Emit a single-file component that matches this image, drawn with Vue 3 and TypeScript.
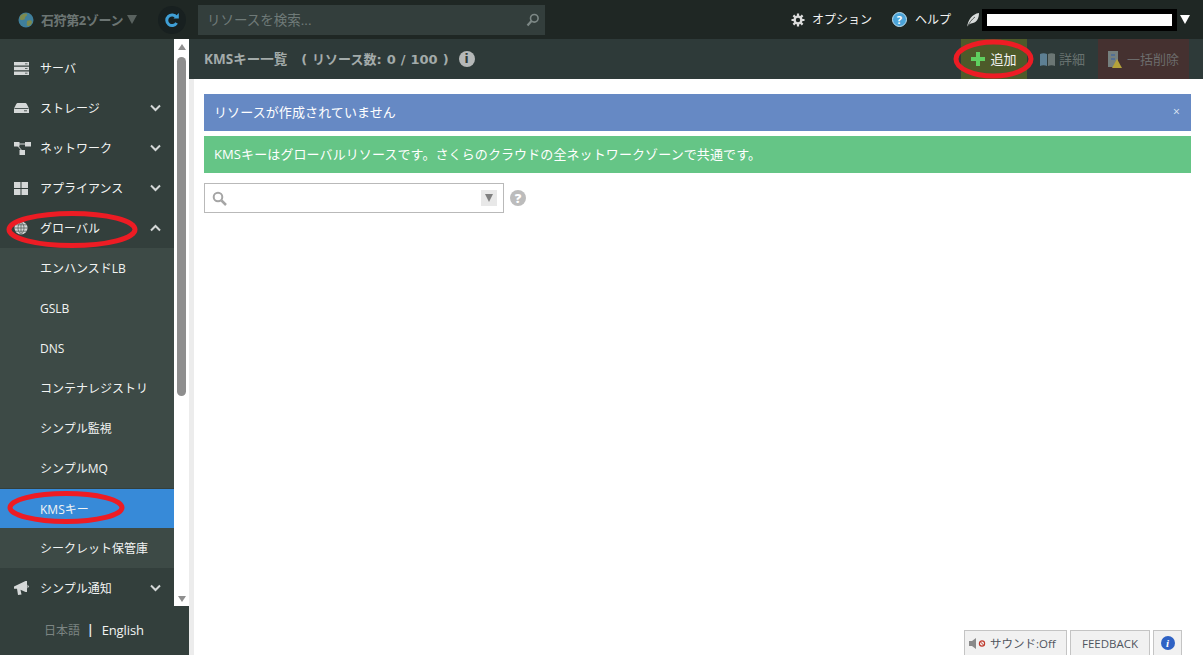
<script setup lang="ts">
interface NavItem { label: string; icon?: string; chevron?: 'up' | 'down'; sub?: boolean; active?: boolean }
const items: NavItem[] = [
  { label: 'サーバ', icon: 'server' },
  { label: 'ストレージ', icon: 'disk', chevron: 'down' },
  { label: 'ネットワーク', icon: 'net', chevron: 'down' },
  { label: 'アプライアンス', icon: 'grid', chevron: 'down' },
  { label: 'グローバル', icon: 'globe', chevron: 'up' },
  { label: 'エンハンスドLB', sub: true },
  { label: 'GSLB', sub: true },
  { label: 'DNS', sub: true },
  { label: 'コンテナレジストリ', sub: true },
  { label: 'シンプル監視', sub: true },
  { label: 'シンプルMQ', sub: true },
  { label: 'KMSキー', sub: true, active: true },
  { label: 'シークレット保管庫', sub: true },
  { label: 'シンプル通知', icon: 'horn', chevron: 'down' },
]
</script>

<template>
  <div class="app">
    <header class="top">
      <div class="zone">
        <svg class="globe" width="16" height="16" viewBox="0 0 16 16">
          <circle cx="8" cy="8" r="7.5" fill="#3f7f9c" />
          <path d="M3 3c2-1 5-2 6-1 1 2-2 2-2 4S4 8 3 8 1 5 3 3zM9 9c2-1 5-1 5 1s-2 4-4 4-1-3-1-5z" fill="#7d8a4e" />
        </svg>
        <span class="zone-name">石狩第2ゾーン</span>
        <span class="zone-arrow"></span>
      </div>
      <div class="refresh">
        <svg width="16" height="16" viewBox="0 0 16 16">
          <path d="M12.4 5.2A5.3 5.3 0 1 0 12.6 11" fill="none" stroke="#3f9fd6" stroke-width="3" />
          <path d="M9.5 6.5h5.3V1z" fill="#3f9fd6" />
        </svg>
      </div>
      <div class="search">
        <span class="search-text">リソースを検索...</span>
        <svg width="14" height="14" viewBox="0 0 14 14">
          <circle cx="8.3" cy="5.3" r="3.8" fill="none" stroke="#7d8886" stroke-width="1.6" />
          <path d="M5.5 8 1.5 12.5" stroke="#7d8886" stroke-width="2.2" />
        </svg>
      </div>
      <div class="spacer"></div>
      <div class="tool gear-tool">
        <svg width="14" height="14" viewBox="0 0 14 14">
          <circle cx="7" cy="7" r="3.4" fill="none" stroke="#dcdcdc" stroke-width="2.4" />
          <path d="M7 .5v3M7 10.5v3M.5 7h3M10.5 7h3M2.4 2.4l2 2M9.6 9.6l2 2M11.6 2.4l-2 2M4.4 9.6l-2 2" stroke="#dcdcdc" stroke-width="2.2" />
        </svg>
        <span>オプション</span>
      </div>
      <div class="tool help-tool">
        <span class="help-dot">?</span>
        <span>ヘルプ</span>
      </div>
      <svg class="feather" width="14" height="16" viewBox="0 0 14 16">
        <path d="M1 15C2 8 6 2 13 1c0 5-2 9-6 10-1 .3-3 .5-4 1.500z" fill="#d8dcdb" />
        <path d="M1 15.500C3 11 6 7 9 5" stroke="#1f2724" stroke-width=".7" fill="none" />
      </svg>
      <div class="account"><div class="account-inner"></div></div>
      <span class="account-arrow"></span>
    </header>

    <div class="body">
      <aside class="side">
        <div class="nav-wrap">
          <nav class="nav">
            <div
              v-for="item in items"
              :key="item.label"
              class="nav-item"
              :class="{ sub: item.sub, active: item.active }"
            >
              <span v-if="!item.sub" class="nav-icon">
                <svg v-if="item.icon === 'server'" width="15" height="13" viewBox="0 0 15 13">
                  <path d="M0 0h15v3.6H0zM0 4.7h15v3.6H0zM0 9.4h15V13H0z" fill="#d5d8d8" />
                  <path d="M11 1.8h2.5M11 6.5h2.5M11 11.2h2.5" stroke="#5d6866" />
                </svg>
                <svg v-else-if="item.icon === 'disk'" width="15" height="10" viewBox="0 0 15 10">
                  <path d="M4 0h7c1 0 1.500.5 2 1.500L15 5.500V10H0V5.500L2 1.500C2.500.5 3 0 4 0z" fill="#d5d8d8" />
                  <path d="M.5 5.500h14M10 7.800h3" stroke="#4d5856" />
                </svg>
                <svg v-else-if="item.icon === 'net'" width="17" height="13" viewBox="0 0 17 13">
                  <path d="M3 2h11M3 3l6 7" stroke="#d5d8d8" stroke-width="1" fill="none" />
                  <path d="M0 0h5.500v4.500H0zM11 0h6v4.500h-6zM5.500 8H11v5H5.500z" fill="#d5d8d8" />
                </svg>
                <svg v-else-if="item.icon === 'grid'" width="14" height="13" viewBox="0 0 14 13">
                  <path d="M0 0h6.500v6H0zM7.500 0H14v6H7.500zM0 7h6.500v6H0zM7.500 7H14v6H7.500z" fill="#d5d8d8" />
                </svg>
                <svg v-else-if="item.icon === 'globe'" width="14" height="14" viewBox="0 0 14 14">
                  <circle cx="7" cy="7" r="6.500" fill="#d5d8d8" />
                  <path d="M.5 7h13M1.500 3.800h11M1.500 10.200h11M7 .5v13M7 .5C3 4 3 10 7 13.500M7 .5c4 3.500 4 9.500 0 13" fill="none" stroke="#59635f" stroke-width=".8" />
                </svg>
                <svg v-else width="15" height="14" viewBox="0 0 15 14">
                  <path d="M0 5.500 11.500 0h1.500v11h-1.500L6.500 8.800 7.500 13.500 4 14 3 7.700H0zM13.500 3.500 15 5.500l-1.500 2z" fill="#d5d8d8" />
                </svg>
              </span>
              <span class="nav-label">{{ item.label }}</span>
              <svg v-if="item.chevron" class="chev" width="11" height="8" viewBox="0 0 11 8">
                <path :d="item.chevron === 'down' ? 'M1 1.500 5.500 6 10 1.500' : 'M1 6.500 5.500 2 10 6.500'" fill="none" stroke="#d5d8d8" stroke-width="2" />
              </svg>
            </div>
          </nav>
          <div class="scrollbar">
            <span class="sb-up"></span>
            <span class="sb-thumb"></span>
            <span class="sb-down"></span>
          </div>
        </div>
        <div class="lang">
          <span class="lang-ja">日本語</span>
          <span class="lang-sep">|</span>
          <span class="lang-en">English</span>
        </div>
      </aside>

      <main class="main">
        <div class="title-bar">
          <div class="title">KMSキー一覧</div>
          <div class="count">( リソース数: 0 / 100 )</div>
          <span class="info-dot">i</span>
          <div class="spacer"></div>
          <div class="act add">
            <svg width="14" height="14" viewBox="0 0 14 14">
              <path d="M5 0h4v5h5v4H9v5H5V9H0V5h5z" fill="#5fcf5f" />
            </svg>
            <span>追加</span>
          </div>
          <div class="act detail">
            <svg width="15" height="13" viewBox="0 0 15 13">
              <path d="M0 1c2-1 5-1 7 0v12c-2-1-5-1-7 0z" fill="#5d7f93" />
              <path d="M8 1c2-1 5-1 7 0v12c-2-1-5-1-7 0z" fill="#6b7674" />
            </svg>
            <span>詳細</span>
          </div>
          <div class="act del">
            <svg width="15" height="17" viewBox="0 0 15 17">
              <path d="M0 0h10v16H0z" fill="#75807f" />
              <path d="M3 4h4M3 8h4" stroke="#4a6a9a" stroke-width="1.500" />
              <path d="M9 8l5 9H4z" fill="#b5a33a" />
            </svg>
            <span>一括削除</span>
          </div>
        </div>
        <div class="content">
          <div class="alert blue">
            <span>リソースが作成されていません</span>
            <span class="close">×</span>
          </div>
          <div class="alert green">KMSキーはグローバルリソースです。さくらのクラウドの全ネットワークゾーンで共通です。</div>
          <div class="filter-row">
            <div class="filter">
              <svg width="15" height="15" viewBox="0 0 15 15">
                <circle cx="6" cy="6" r="4.300" fill="none" stroke="#a5a5a5" stroke-width="2" />
                <path d="M9.500 9.500 14 14" stroke="#a5a5a5" stroke-width="2.500" />
              </svg>
              <span class="filter-drop"></span>
            </div>
            <span class="q-dot">?</span>
          </div>
          <div class="footer">
            <div class="fbtn sound">
              <svg width="18" height="11" viewBox="0 0 18 11">
                <path d="M0 3h3l4-3v11L3 8H0z" fill="#8a8a8a" />
                <circle cx="13" cy="5.500" r="2.600" fill="none" stroke="#c0392b" stroke-width="1.200" />
                <path d="M11.200 3.700l3.600 3.600" stroke="#c0392b" />
              </svg>
              <span>サウンド:Off</span>
            </div>
            <div class="fbtn feedback">FEEDBACK</div>
            <div class="fbtn info"><span class="fi">i</span></div>
          </div>
        </div>
      </main>
    </div>

    <svg class="marks" width="1203" height="655" viewBox="0 0 1203 655">
      <ellipse cx="72" cy="229.500" rx="63" ry="16" />
      <ellipse cx="66" cy="507.500" rx="56" ry="14" />
      <ellipse cx="993.500" cy="59" rx="37.500" ry="17" />
    </svg>
  </div>
</template>

<style scoped>
.app {
  position: relative;
  width: 1203px;
  height: 655px;
  overflow: hidden;
  display: flex;
  flex-direction: column;
  background: #fff;
  font-family: "Open Sans", "Noto Sans CJK JP", sans-serif;
  font-size: 13px;
  color: #fff;
}
.top {
  height: 39px;
  flex: none;
  display: flex;
  align-items: center;
  background: #1f2724;
}
.zone { width: 158px; padding-left: 18px; box-sizing: border-box; display: flex; align-items: center; }
.globe { flex: none; }
.zone-name { margin-left: 7px; font-weight: 700; font-size: 13px; color: #6c7573; letter-spacing: -0.4px; white-space: nowrap; }
.zone-arrow { margin-left: 4px; border-left: 5px solid transparent; border-right: 5px solid transparent; border-top: 9px solid #59625f; }
.refresh { width: 28px; height: 28px; border-radius: 50%; background: #182020; display: flex; align-items: center; justify-content: center; flex: none; }
.search {
  margin-left: 12px;
  width: 347px;
  height: 30px;
  box-sizing: border-box;
  background: #333e3c;
  padding: 0 5px 0 9px;
  display: flex;
  align-items: center;
  justify-content: space-between;
  color: #6f7a78;
}
.search-text { font-size: 13.5px; padding-bottom: 2px; }
.spacer { flex: 1; }
.tool { display: flex; align-items: center; color: #f2f2f2; font-size: 12px; white-space: nowrap; }
.tool span:last-child { padding-bottom: 1px; }
.gear-tool { gap: 7px; }
.help-tool { margin-left: 20px; gap: 8px; }
.help-tool .help-dot { padding: 0; }
.help-dot {
  width: 15px; height: 15px; border-radius: 50%; background: #4ba3d8; border: 1px solid #bfe0f2; box-sizing: border-box;
  display: flex; align-items: center; justify-content: center; font-size: 11px; font-weight: 700; color: #fff;
}
.feather { margin-left: 15px; }
.account { margin-left: 2px; width: 195px; height: 22px; background: #000; box-sizing: border-box; padding: 5px; }
.account-inner { height: 12px; background: #fff; }
.account-arrow { margin: 0 13px 0 3px; border-left: 5px solid transparent; border-right: 5px solid transparent; border-top: 9px solid #fff; }

.body { flex: 1; display: flex; min-height: 0; }
.side { width: 189px; flex: none; display: flex; flex-direction: column; background: #333f3c; }
.nav-wrap { height: 567px; display: flex; flex: none; overflow: hidden; }
.nav { width: 174px; flex: none; padding-top: 9px; box-sizing: border-box; }
.nav-item { height: 40px; display: flex; align-items: center; padding-left: 14px; color: #f2f4f3; font-size: 12px; white-space: nowrap; }
.nav-item.sub { padding-left: 40px; background: #3d4a46; }
.nav-item.active { background: #378ad8; margin-top: 1px; margin-bottom: -1px; }
.nav-icon { width: 26px; flex: none; display: flex; align-items: center; }
.nav-label { flex: 1; }
.chev { margin-right: 13px; }
.scrollbar { width: 15px; background: #fff; display: flex; flex-direction: column; align-items: center; }
.sb-up { margin-top: 5px; border-left: 4.5px solid transparent; border-right: 4.5px solid transparent; border-bottom: 6px solid #8f8f8f; }
.sb-thumb { margin-top: 7px; width: 9px; height: 339px; border-radius: 5px; background: #8e8e8e; flex: none; }
.sb-down { margin-top: auto; margin-bottom: 4px; border-left: 4.5px solid transparent; border-right: 4.5px solid transparent; border-top: 6px solid #8f8f8f; }
.lang { flex: 1; display: flex; align-items: center; padding: 0 0 2px 44px; font-size: 12px; white-space: nowrap; }
.lang-ja { color: #7c8583; }
.lang-sep { margin: 0 8px 0 7px; color: #e9eeee; font-weight: 700; }
.lang-en { color: #f2f4f3; font-size: 13px; letter-spacing: -0.1px; }

.main { flex: 1; min-width: 0; display: flex; flex-direction: column; }
.title-bar { height: 40px; flex: none; display: flex; align-items: stretch; background: #2e3a39; padding: 0 14px 0 15px; }
.title { align-self: center; padding-bottom: 2px; font-weight: 700; font-size: 13.5px; color: #a3abaa; white-space: nowrap; }
.count {
  align-self: center; margin-left: 14px; padding-bottom: 2px; font-weight: 700; font-size: 13px; color: #a3abaa; white-space: nowrap;
  font-family: "DejaVu Sans", "Noto Sans CJK JP", sans-serif; word-spacing: 0.5px;
}
.info-dot {
  align-self: center; margin-left: 10px; width: 16px; height: 16px; border-radius: 50%; background: #b5b8b8; color: #2e3a39;
  display: flex; align-items: center; justify-content: center; font-weight: 800; font-size: 12px; font-family: "DejaVu Sans", sans-serif;
}
.act { display: flex; align-items: center; font-size: 13px; white-space: nowrap; }
.act span { padding-bottom: 2px; }
.add { width: 66px; justify-content: center; gap: 5px; background: #4d5a2a; color: #f5f5f5; }
.detail { width: 71px; justify-content: center; gap: 4px; color: #687270; }
.del { width: 91px; justify-content: center; gap: 4px; background: #453130; color: #6c6c6c; }

.content {
  flex: 1;
  position: relative;
  border-left: 5px solid #ececec;
  padding: 15px 12px 0 10px;
  display: flex;
  flex-direction: column;
  min-height: 0;
}
.alert { height: 37px; flex: none; display: flex; align-items: center; justify-content: space-between; padding: 0 10px 2px; box-sizing: border-box; color: #fff; letter-spacing: 0.1px; }
.blue { background: #6689c4; }
.green { background: #65c586; margin-top: 5px; }
.close { font-size: 12px; color: #dfe7f3; margin-right: 1px; }
.filter-row { margin-top: 10px; display: flex; align-items: center; }
.filter {
  width: 300px; height: 30px; box-sizing: border-box; border: 1px solid #b9b9b9; padding: 0 6px 0 7px;
  display: flex; align-items: center; justify-content: space-between;
}
.filter-drop {
  width: 16px; height: 16px; background: #e8e8e8; box-sizing: border-box; display: flex; justify-content: center; align-items: center;
}
.filter-drop::after { content: ""; border-left: 4px solid transparent; border-right: 4px solid transparent; border-top: 8px solid #808080; }
.q-dot {
  margin-left: 6px; width: 16px; height: 16px; border-radius: 50%; background: #bcbcbc; color: #fff;
  display: flex; align-items: center; justify-content: center; font-weight: 800; font-size: 13px;
}
.footer { margin-top: auto; display: flex; justify-content: flex-end; gap: 3px; padding-right: 9px; }
.fbtn {
  height: 25px; box-sizing: border-box; border: 1px solid #c4c4c4; border-bottom: none; background: #f1f1f1; color: #50555e;
  display: flex; align-items: center; justify-content: center; font-size: 11.5px; white-space: nowrap;
}
.fbtn span { padding-bottom: 1px; }
.sound { width: 103px; gap: 3px; justify-content: flex-start; padding-left: 4px; }
.feedback { width: 80px; }
.info { width: 29px; }
.info .fi { padding: 0; }
.fi {
  width: 14px; height: 14px; border-radius: 50%; background: #2f62c4; color: #fff; display: flex; align-items: center; justify-content: center;
  font: italic 700 11px "Liberation Serif", serif;
}
.marks { position: absolute; left: 0; top: 0; pointer-events: none; }
.marks ellipse { fill: none; stroke: #ed1c24; stroke-width: 5; }
</style>
